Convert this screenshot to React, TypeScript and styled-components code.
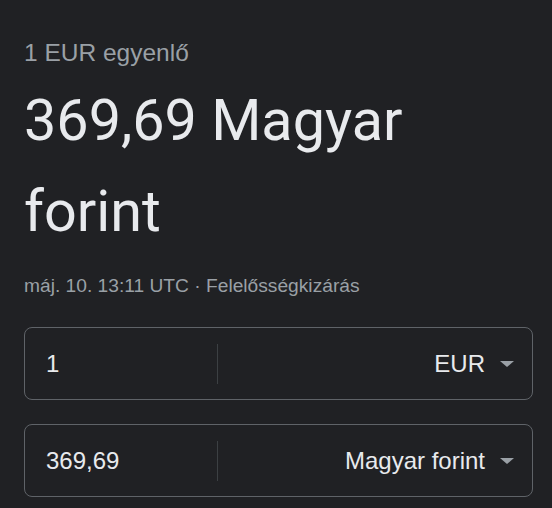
import React from "react";
import styled, { createGlobalStyle } from "styled-components";

const Global = createGlobalStyle`
  html, body { margin: 0; padding: 0; background: #202124; }
  body { width: 552px; height: 508px; overflow: hidden; }
`;

const Page = styled.div`
  box-sizing: border-box;
  width: 552px;
  height: 508px;
  padding: 39px 19px 0 24px;
  background: #202124;
  font-family: "Liberation Sans", Arial, sans-serif;
`;

const Caption = styled.div`
  font-size: 24.5px;
  line-height: 28px;
  color: #9aa0a6;
`;

const Result = styled.div`
  font-family: Roboto, "Open Sans", sans-serif;
  font-size: 57.5px;
  line-height: 91px;
  color: #e8eaed;
  margin-top: 8px;
`;

const Meta = styled.div`
  font-size: 19.2px;
  line-height: 24px;
  color: #9aa0a6;
  margin-top: 17px;
`;

const Boxes = styled.div`
  display: flex;
  flex-direction: column;
  gap: 24px;
  margin-top: 29px;
`;

const Box = styled.div`
  box-sizing: border-box;
  height: 73px;
  border: 1px solid #5f6368;
  border-radius: 8px;
  display: flex;
  align-items: center;
`;

const Amount = styled.div`
  width: 192px;
  padding-left: 21px;
  box-sizing: border-box;
  font-size: 24px;
  color: #e8eaed;
`;

const Divider = styled.div`
  width: 1px;
  height: 40px;
  background: #3c4043;
`;

const Currency = styled.div`
  flex: 1;
  display: flex;
  justify-content: flex-end;
  align-items: center;
  gap: 15px;
  padding-right: 18px;
  font-size: 24px;
  color: #e8eaed;
`;

const Caret = styled.span`
  width: 0;
  height: 0;
  border-left: 7px solid transparent;
  border-right: 7px solid transparent;
  border-top: 6px solid #9aa0a6;
`;

const Row = ({ amount, currency }: { amount: string; currency: string }) => (
  <Box>
    <Amount>{amount}</Amount>
    <Divider />
    <Currency>
      {currency}
      <Caret />
    </Currency>
  </Box>
);

export default function App() {
  return (
    <>
      <Global />
      <Page>
        <Caption>1 EUR egyenlő</Caption>
        <Result>369,69 Magyar forint</Result>
        <Meta>máj. 10. 13:11 UTC · Felelősségkizárás</Meta>
        <Boxes>
          <Row amount="1" currency="EUR" />
          <Row amount="369,69" currency="Magyar forint" />
        </Boxes>
      </Page>
    </>
  );
}
